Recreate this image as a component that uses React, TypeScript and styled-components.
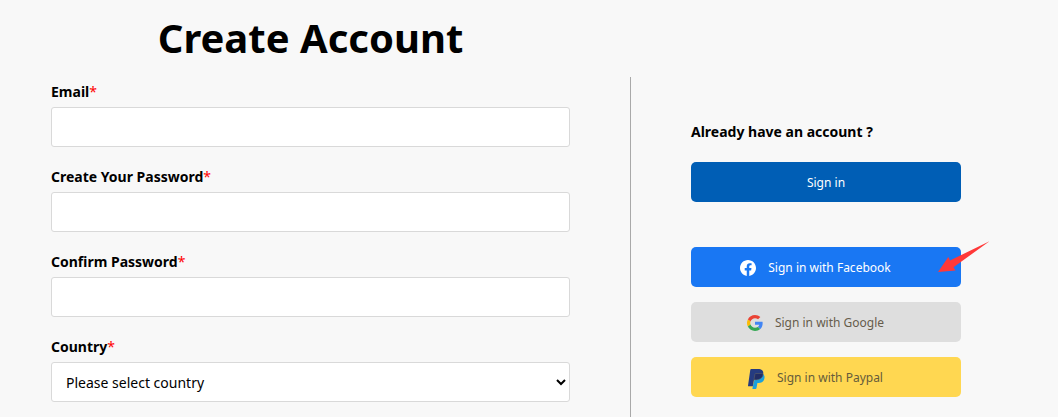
import React from 'react';
import styled, { createGlobalStyle } from 'styled-components';

const GlobalStyle = createGlobalStyle`
  *, *::before, *::after { box-sizing: border-box; }
  body {
    margin: 0;
    background: #f8f8f8;
    color: #000;
    font-family: "Noto Sans", "Open Sans", sans-serif;
    font-size: 14px;
  }
`;

const Page = styled.div`
  min-height: 100vh;
  padding: 0 97px 0 51px;
  display: flex;
  flex-direction: column;
`;

const Columns = styled.main`
  flex: 1;
  display: grid;
  grid-template-columns: minmax(0, 1fr) 331px;
  grid-template-rows: auto 1fr;
  column-gap: 60px;
`;

const Title = styled.h1`
  margin: 0;
  height: 77px;
  font-size: 40px;
  line-height: 76px;
  font-weight: 700;
  text-align: center;
  white-space: nowrap;
`;

const Form = styled.form`
  grid-column: 1;
  display: flex;
  flex-direction: column;
  gap: 15px;
  padding-bottom: 15px;
`;

const Field = styled.div`
  display: flex;
  flex-direction: column;
`;

const Label = styled.label`
  font-size: 14px;
  line-height: 30px;
  font-weight: 700;
`;

const Required = styled.span`
  color: #f00;
  font-weight: 400;
`;

const Input = styled.input`
  width: 100%;
  height: 40px;
  padding: 0 14px;
  border: 1px solid #d9d9d9;
  border-radius: 3px;
  background: #fff;
  font: inherit;
`;

const Select = styled.select`
  width: 100%;
  height: 40px;
  padding: 0 0 0 10px;
  border: 1px solid #d9d9d9;
  border-radius: 3px;
  background: #fff;
  color: #000;
  font-family: inherit;
  font-size: 14px;
`;

const Aside = styled.section`
  grid-column: 2;
  padding: 40px 0 20px 60px;
  border-left: 1px solid #a9a9a9;
`;

const Prompt = styled.h2`
  margin: 0 0 15px;
  font-size: 14px;
  line-height: 30px;
  font-weight: 700;
`;

const Button = styled.button<{ $bg: string; $color?: string }>`
  width: 100%;
  height: 40px;
  padding: 2px 0 0;
  display: flex;
  align-items: center;
  justify-content: center;
  border: 0;
  border-radius: 5px;
  background: ${(p) => p.$bg};
  color: ${(p) => p.$color ?? '#fff'};
  font-family: inherit;
  font-size: 12px;
  line-height: 20px;
  cursor: pointer;
`;

const SocialButton = styled(Button)`
  gap: 12px;
  padding-right: 21px;
`;

const SocialList = styled.div`
  margin-top: 45px;
  display: flex;
  flex-direction: column;
  gap: 15px;
`;

const ArrowAnchor = styled.div`
  position: relative;
`;

const Arrow = styled.svg`
  position: absolute;
  top: -7px;
  right: -30px;
  pointer-events: none;
`;

const FacebookIcon = () => (
  <svg width="16" height="16" viewBox="0 0 24 24" aria-hidden="true">
    <path
      fill="#fff"
      d="M24 12.073C24 5.405 18.627 0 12 0S0 5.405 0 12.073C0 18.1 4.388 23.094 10.125 24v-8.437H7.078v-3.49h3.047v-2.66c0-3.025 1.792-4.697 4.533-4.697 1.312 0 2.686.236 2.686.236v2.971H15.83c-1.491 0-1.956.93-1.956 1.886v2.264h3.328l-.532 3.49h-2.796V24C19.612 23.094 24 18.1 24 12.073z"
    />
  </svg>
);

const GoogleIcon = () => (
  <svg width="16" height="16" viewBox="0 0 48 48" aria-hidden="true">
    <path fill="#EA4335" d="M24 9.5c3.54 0 6.71 1.22 9.21 3.6l6.85-6.85C35.9 2.38 30.47 0 24 0 14.62 0 6.51 5.38 2.56 13.22l7.98 6.19C12.43 13.72 17.74 9.5 24 9.5z" />
    <path fill="#4285F4" d="M46.98 24.55c0-1.57-.15-3.09-.38-4.55H24v9.02h12.94c-.58 2.96-2.26 5.48-4.78 7.18l7.73 6c4.51-4.18 7.09-10.36 7.09-17.65z" />
    <path fill="#FBBC05" d="M10.53 28.59c-.48-1.45-.76-2.99-.76-4.59s.27-3.14.76-4.59l-7.98-6.19C.92 16.46 0 20.12 0 24c0 3.88.92 7.54 2.56 10.78l7.97-6.19z" />
    <path fill="#34A853" d="M24 48c6.48 0 11.93-2.13 15.89-5.81l-7.73-6c-2.15 1.45-4.92 2.3-8.16 2.3-6.26 0-11.57-4.22-13.47-9.91l-7.98 6.19C6.51 42.62 14.62 48 24 48z" />
  </svg>
);

const PaypalIcon = () => (
  <svg width="17" height="22" viewBox="0 -2 17 22" aria-hidden="true">
    <path fill="#1ba0dc" d="M15.2 5.2c1.2.9 1.6 2.3 1.2 4.2-.7 3.2-2.8 4.6-5.8 4.6H9.4l-.9 5.1c-.1.5-.4.9-.9.9H4.4l.5-3 2-8z" />
    <path fill="#253b80" d="M3.2 0h6.6c3.9 0 6 1.7 5.4 5.1-.6 3.8-3.1 5.7-6.9 5.7H6L4.8 17.3H.5c-.4 0-.5-.3-.5-.6L2.3.8c.1-.5.4-.8.9-.8z" />
    <path fill="#222d65" stroke="#6b6a62" strokeWidth="0.5" d="M7.7 4.5h5.5c.8 0 1.5.2 2 .6-.6 3.8-3.1 5.7-6.9 5.7H6l.9-5.5c.1-.5.4-.8.8-.8z" />
  </svg>
);

const RequiredMark = () => <Required>*</Required>;

export default function App() {
  return (
    <>
      <GlobalStyle />
      <Page>
        <Columns>
          <Title>Create Account</Title>
          <Form>
            <Field>
              <Label htmlFor="email">Email<RequiredMark /></Label>
              <Input id="email" type="email" required />
            </Field>
            <Field>
              <Label htmlFor="password">Create Your Password<RequiredMark /></Label>
              <Input id="password" type="password" required />
            </Field>
            <Field>
              <Label htmlFor="confirm">Confirm Password<RequiredMark /></Label>
              <Input id="confirm" type="password" required />
            </Field>
            <Field>
              <Label htmlFor="country">Country<RequiredMark /></Label>
              <Select id="country" required defaultValue="">
                <option value="">Please select country</option>
              </Select>
            </Field>
          </Form>
          <Aside>
            <Prompt>Already have an account ?</Prompt>
            <Button type="button" $bg="#005eb5">Sign in</Button>
            <SocialList>
              <ArrowAnchor>
                <SocialButton type="button" $bg="#1977f3">
                  <FacebookIcon />
                  Sign in with Facebook
                </SocialButton>
                <Arrow width="54" height="34" viewBox="0 0 54 34" aria-hidden="true">
                  <path fill="#ff3838" d="M52.500 1.200 16.500 27.300 18.500 30.500 1 32 11.300 17 13 20.500z" />
                </Arrow>
              </ArrowAnchor>
              <SocialButton type="button" $bg="#dedede" $color="#665c4b">
                <GoogleIcon />
                Sign in with Google
              </SocialButton>
              <SocialButton type="button" $bg="#ffd751" $color="#665c3b">
                <PaypalIcon />
                Sign in with Paypal
              </SocialButton>
            </SocialList>
          </Aside>
        </Columns>
      </Page>
    </>
  );
}
